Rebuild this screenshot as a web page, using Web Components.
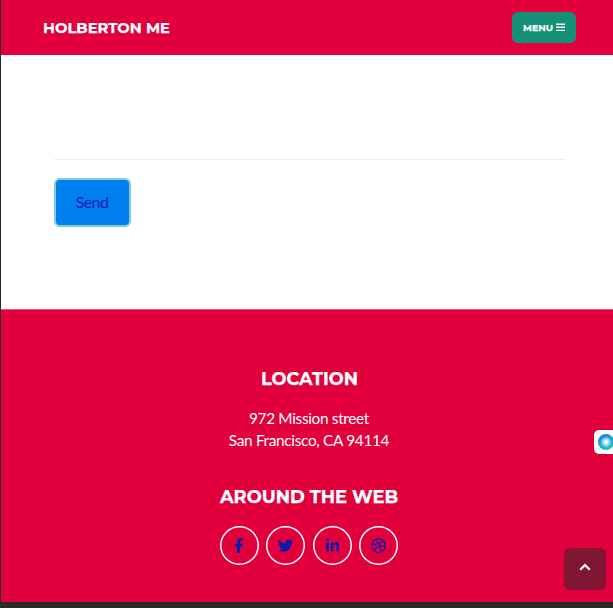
<!DOCTYPE html>
<html lang="en"><head><meta charset="utf-8"><title>Holberton Me</title>
<style>
html,body{margin:0;height:608px;overflow:hidden;background:#292b2d}
body{font-family:Lato,"Liberation Sans",sans-serif}
</style></head><body>
<page-shell></page-shell>
<script>
const define=(name,html)=>customElements.define(name,class extends HTMLElement{
  constructor(){super();this.attachShadow({mode:'open'}).innerHTML=html}
});
const heading='font-family:Montserrat,Inter,"Liberation Sans",sans-serif;font-weight:700;';

/* Text in the heading face, fitted to the width attribute */
customElements.define('fit-heading',class extends HTMLElement{
  connectedCallback(){
    const w=this.getAttribute('width'),s=this.getAttribute('size'),h=Math.ceil(s*1.3);
    const root=this.attachShadow({mode:'open'});
    root.innerHTML=`<style>:host{display:block;height:${h}px;color:#fff}
      svg{display:block;overflow:visible}text{${heading}font-size:${s}px;stroke:currentColor;stroke-width:.25px}</style>
      <svg width="${w}" height="${h}"><text x="0" y="${s}" textLength="${w}" lengthAdjust="spacingAndGlyphs" fill="currentColor"></text></svg>`;
    root.querySelector('text').textContent=this.textContent;
  }
});

define('nav-bar',`<style>
:host{display:flex;box-sizing:border-box;height:55px;flex:none;background:#e1003c;justify-content:space-between;padding:12px 37px 0 41.5px}
.brand{padding-top:6px}
button{box-sizing:border-box;width:64px;height:31px;border:0;border-radius:6px;background:#159077;color:#fff;display:flex;align-items:center;padding:0 0 1px 11px;gap:3px}
svg{display:block}
</style><fit-heading class="brand" width="127" size="15.2">HOLBERTON ME</fit-heading>
<button><fit-heading width="30" size="9.6">MENU</fit-heading><svg width="9" height="9" viewBox="0 0 9 9"><path d="M0 1.2h9M0 4.3h9M0 7.4h9" stroke="#fff" stroke-width="1.4"/></svg></button>`);

define('contact-form',`<style>
:host{display:block;box-sizing:border-box;height:254px;flex:none;background:#fff;padding:104px 48px 0 53px}
hr{height:1px;border:0;margin:0 0 18px;background:#eceeef}
button{box-sizing:border-box;display:block;width:77px;height:49px;padding:0 1px 2px 0;border:2px solid #7fcfd0;border-radius:6px;background:#007ff0;color:#0a22ab;font:16px Lato,sans-serif;letter-spacing:-.6px}
</style><hr><button>Send</button>`);

define('social-link',`<style>
:host{display:grid;place-items:center;box-sizing:border-box;width:39px;height:39px;border-radius:50%;box-shadow:inset 0 0 0 1.5px #fff;color:#0a1cae}
</style><slot></slot>`);

define('site-footer',`<style>
:host{display:flex;flex-direction:column;align-items:center;box-sizing:border-box;height:293px;flex:none;background:#e1003c;color:#fff;border-top:1px solid #e8557d;padding:57px 0 0 4px}
p{margin:17px 0 34px;text-align:center;font-size:15.4px;line-height:22px;letter-spacing:-.33px}
.links{display:flex;gap:7.6px;margin-top:18px}
svg{display:block;fill:currentColor}
</style>
<fit-heading width="97" size="17.6">LOCATION</fit-heading>
<p>972 Mission street<br>San Francisco, CA 94114</p>
<fit-heading width="178" size="17.6">AROUND THE WEB</fit-heading>
<div class="links">
<social-link><svg width="9.5" height="15.2" viewBox="0 0 320 512"><path d="M279.14 288l14.22-92.66h-88.91v-60.13c0-25.35 12.42-50.06 52.24-50.06h40.42V6.26S260.43 0 225.36 0c-73.22 0-121.08 44.38-121.08 124.72v70.62H22.89V288h81.39v224h100.17V288z"/></svg></social-link>
<social-link><svg width="15.2" height="15.2" viewBox="0 0 512 512"><path d="M459.37 151.716c.325 4.548.325 9.097.325 13.645 0 138.72-105.583 298.558-298.558 298.558-59.452 0-114.68-17.219-161.137-47.106 8.447.974 16.568 1.299 25.34 1.299 49.055 0 94.213-16.568 130.274-44.832-46.132-.975-84.792-31.188-98.112-72.772 6.498.974 12.995 1.624 19.818 1.624 9.421 0 18.843-1.3 27.614-3.573-48.081-9.747-84.143-51.98-84.143-102.985v-1.299c13.969 7.797 30.214 12.67 47.431 13.319-28.264-18.843-46.781-51.005-46.781-87.391 0-19.492 5.197-37.36 14.294-52.954 51.655 63.675 129.3 105.258 216.365 109.807-1.624-7.797-2.599-15.918-2.599-24.04 0-57.828 46.782-104.934 104.934-104.934 30.213 0 57.502 12.67 76.67 33.137 23.715-4.548 46.456-13.32 66.599-25.34-7.798 24.366-24.366 44.833-46.132 57.827 21.117-2.273 41.584-8.122 60.426-16.243-14.292 20.791-32.161 39.308-52.628 54.253z"/></svg></social-link>
<social-link><svg width="13.3" height="15.2" viewBox="0 0 448 512"><path d="M100.28 448H7.4V148.9h92.88zM53.79 108.1C24.09 108.1 0 83.5 0 53.8a53.79 53.79 0 0 1 107.58 0c0 29.7-24.1 54.3-53.79 54.3zM447.9 448h-92.68V302.4c0-34.7-.7-79.2-48.29-79.2-48.29 0-55.69 37.7-55.69 76.7V448h-92.78V148.9h89.08v40.8h1.3c12.4-23.5 42.69-48.3 87.88-48.3 94 0 111.28 61.9 111.28 142.3V448z"/></svg></social-link>
<social-link><svg width="15.2" height="15.2" viewBox="0 0 512 512"><g fill="none" stroke="currentColor" stroke-width="38"><circle cx="256" cy="256" r="230"/><path d="M178 42Q310 205 342 466M30 216Q300 220 414 92M106 426Q205 230 486 275"/></g></svg></social-link>
</div>`);

define('scroll-top',`<style>
:host{display:grid;place-items:center;box-sizing:border-box;width:42px;height:42px;padding-bottom:5px;border-radius:6px;background:#801633}
</style><svg width="12" height="8" viewBox="0 0 12 8"><path d="M1.2 6.7 6 2l4.8 4.7" fill="none" stroke="#fff" stroke-width="2.2"/></svg>`);

define('side-widget',`<style>
:host{display:flex;align-items:center;box-sizing:border-box;width:24px;height:24px;padding-left:4px;border-radius:5px 0 0 5px;background:#fff;box-shadow:0 0 2px #0004}
i{flex:none;width:16px;height:16px;border-radius:50%;background:radial-gradient(circle closest-side,#fff 0 14%,#fff0 72%),linear-gradient(155deg,#2564dc,#12a8e8 45%,#20d4aa)}
</style><i></i>`);

define('page-shell',`<style>
:host{display:flex;flex-direction:column;position:relative;box-sizing:border-box;width:613px;height:608px;padding-left:1px;overflow:hidden;background:#292b2d}
scroll-top{position:absolute;left:564px;top:548px}
side-widget{position:absolute;left:594px;top:430px}
</style><nav-bar></nav-bar><contact-form></contact-form><site-footer></site-footer><side-widget></side-widget><scroll-top></scroll-top>`);
</script></body></html>
